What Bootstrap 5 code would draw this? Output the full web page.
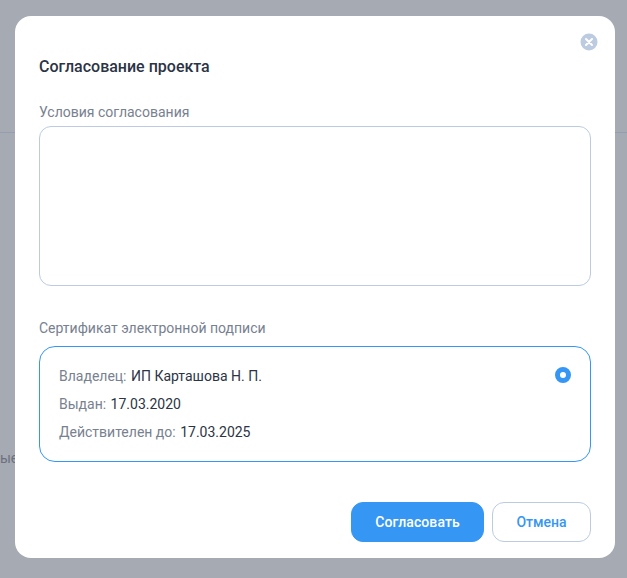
<!DOCTYPE html>
<html lang="ru">
<head>
<meta charset="utf-8">
<title>Согласование проекта</title>
<link href="https://cdn.jsdelivr.net/npm/bootstrap@5.3.0/dist/css/bootstrap.min.css" rel="stylesheet">
<style>
html,body{height:100%;margin:0;overflow:hidden}
body{font-family:Roboto,"Liberation Sans",sans-serif;background:#a6aab2;color:#2b3445}
.under-rule{height:133px;border-bottom:1px solid #959eb0}
.under-text{padding:316px 0 0 0;font-size:14px;line-height:18px;color:#6b7180}
.sheet{position:fixed;left:15px;top:16px;width:600px;height:542px;background:#fff;border-radius:16px;padding:0 24px 16px;border:0}
.sheet-close{position:absolute;right:17px;top:17px;width:18px;height:18px;padding:0;border:0;background:none;line-height:0}
.sheet-title{font-size:16px;line-height:20px;font-weight:500;color:#2b3445;margin:41px 0 26px}
.field-label{font-size:14px;line-height:18px;color:#78818f;margin:0 0 5px}
.terms{height:160px;border:1px solid #bccbe0;border-radius:12px;resize:none;box-shadow:none;padding:10px 16px}
.cert-label{margin:33px 0 9px}
.cert-box{height:116px;border:1px solid #3596f3;border-radius:16px;padding:20px 19px 0;position:relative}
.cert-row{font-size:14px;line-height:18px;margin-bottom:10px;color:#2b3445}
.cert-key{color:#78818f;margin-right:1px}
.cert-radio{width:16px;height:16px;border-radius:50%;border:5px solid #3596f3;background:#fff;margin:0}
.act{height:40px;border-radius:12px;font-size:14px;font-weight:500;line-height:20px;padding:0}
.act-main{width:133px;background:#3596f3;border:1px solid #3596f3;color:#fff;letter-spacing:.1px}
.act-alt{width:99px;background:#fff;border:1px solid #bccbe0;color:#3596f3}
</style>
</head>
<body>
<div class="under-rule"></div>
<div class="under-text">ые</div>
<div class="sheet d-flex flex-column" role="dialog">
  <button class="sheet-close" type="button" aria-label="Закрыть">
    <svg width="18" height="18" viewBox="0 0 18 18"><circle cx="9" cy="9" r="8.5" fill="#bccbe0"/><path d="M6 6l6 6M12 6l-6 6" stroke="#fff" stroke-width="2" stroke-linecap="round"/></svg>
  </button>
  <h5 class="sheet-title">Согласование проекта</h5>
  <label class="field-label" for="terms">Условия согласования</label>
  <textarea class="form-control terms" id="terms"></textarea>
  <div class="field-label cert-label">Сертификат электронной подписи</div>
  <div class="cert-box d-flex justify-content-between align-items-start">
    <div>
      <div class="cert-row"><span class="cert-key">Владелец:</span> ИП Карташова Н. П.</div>
      <div class="cert-row"><span class="cert-key">Выдан:</span> 17.03.2020</div>
      <div class="cert-row"><span class="cert-key">Действителен до:</span> 17.03.2025</div>
    </div>
    <div class="cert-radio"></div>
  </div>
  <div class="d-flex justify-content-end gap-2" style="margin-top:40px">
    <button class="btn act act-main" type="button">Согласовать</button>
    <button class="btn act act-alt" type="button">Отмена</button>
  </div>
</div>
</body>
</html>
